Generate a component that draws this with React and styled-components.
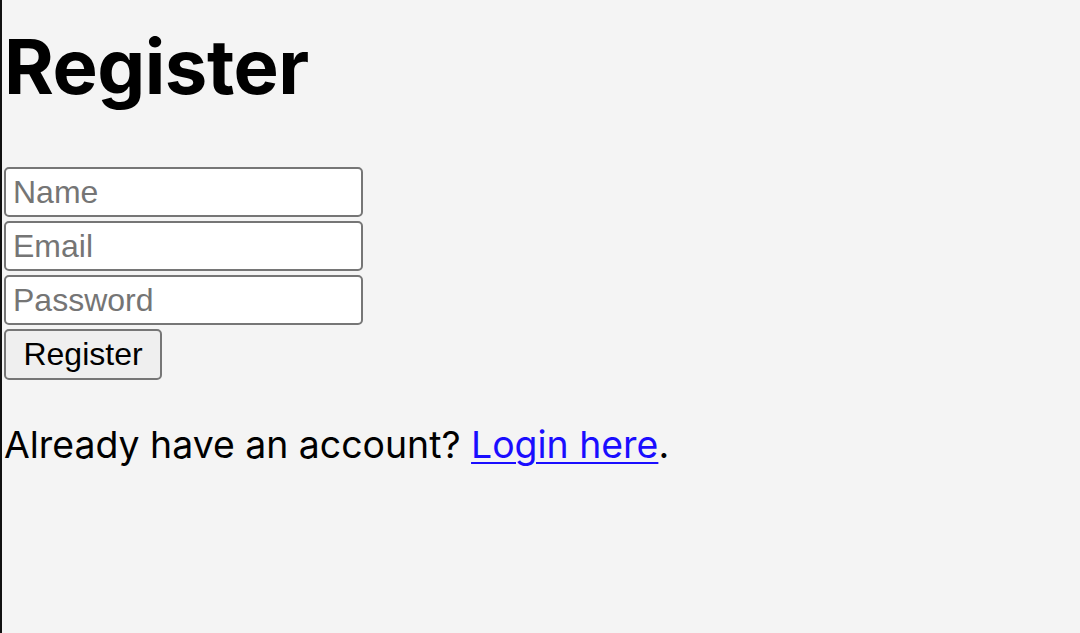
import React from 'react';
import styled, { createGlobalStyle } from 'styled-components';

const GlobalStyle = createGlobalStyle`
    html, body {
        margin: 0;
        padding: 0;
        background: #f4f4f4;
    }
`;

const Page = styled.div`
    display: flow-root;
    min-height: 100vh;
    box-sizing: border-box;
    border-left: 2px solid #111;
    padding-left: 2px;
    font-family: Inter, "Noto Sans", sans-serif;
    color: #000;
`;

const Title = styled.h1`
    margin: 21px 0 56px;
    font-size: 76px;
    line-height: 90px;
    font-weight: 700;
    letter-spacing: -0.5px;
`;

const Form = styled.form`
    display: flex;
    flex-direction: column;
    align-items: flex-start;
    gap: 4px;
`;

const Field = styled.input`
    box-sizing: border-box;
    width: 359px;
    height: 50px;
    margin: 0;
    padding: 0 7px;
    border: 2px solid #767676;
    border-radius: 5px;
    background: #fff;
    font-family: "Liberation Sans", Arial, sans-serif;
    font-size: 32px;
    color: #000;

    &::placeholder {
        color: #757575;
    }
`;

const Submit = styled.button`
    box-sizing: border-box;
    width: 158px;
    height: 51px;
    margin: 0;
    padding: 0;
    border: 2px solid #767676;
    border-radius: 5px;
    background: #efefef;
    font-family: "Liberation Sans", Arial, sans-serif;
    font-size: 32px;
    color: #000;
`;

const Note = styled.p`
    margin: 42px 0 0;
    font-size: 37.4px;
    line-height: 46px;
`;

const LoginLink = styled.a`
    color: #1a0dff;
    text-decoration: underline;
    text-decoration-thickness: 2px;
    text-underline-offset: 4px;
`;

const App = () => {
    return (
        <Page>
            <GlobalStyle />
            <Title>Register</Title>
            <Form onSubmit={(e) => e.preventDefault()}>
                <Field type="text" placeholder="Name" />
                <Field type="email" placeholder="Email" />
                <Field type="password" placeholder="Password" />
                <Submit type="submit">Register</Submit>
            </Form>
            <Note>
                Already have an account? <LoginLink href="#">Login here</LoginLink>.
            </Note>
        </Page>
    );
}

export default App;
